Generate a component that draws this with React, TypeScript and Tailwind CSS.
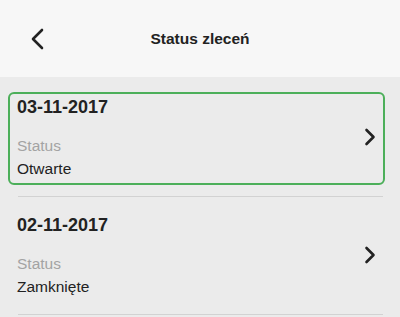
const orders = [
  { date: '03-11-2017', status: 'Otwarte', selected: true },
  { date: '02-11-2017', status: 'Zamknięte', selected: false },
]

function Chevron({ dir }: { dir: 'left' | 'right' }) {
  if (dir === 'left')
    return (
      <svg width="16" height="24" viewBox="0 0 16 24" fill="none" stroke="currentColor" strokeWidth="2.6" strokeLinecap="round" strokeLinejoin="round">
        <path d="M13 3 L4 12 L13 21" />
      </svg>
    )
  return (
    <svg width="14" height="20" viewBox="0 0 14 20" fill="none" stroke="currentColor" strokeWidth="2.6" strokeLinecap="round" strokeLinejoin="round">
      <path d="M3.5 3 L10.5 10 L3.5 17" />
    </svg>
  )
}

export default function App() {
  return (
    <div className="w-[400px] h-[317px] overflow-hidden bg-[#ebebeb] font-['Liberation_Sans',Arial,sans-serif] text-[#222]">
      {/* header */}
      <header className="h-[77px] bg-[#f7f7f7] flex items-center relative">
        <button className="ml-[29px] flex items-center text-[#222]">
          <Chevron dir="left" />
        </button>
        <h1 className="absolute left-0 right-0 text-center text-[15.5px] font-bold pointer-events-none">Status zleceń</h1>
      </header>

      {/* list */}
      <div className="pl-2 pr-[15px] pt-[15px]">
        {orders.map(o => (
          <div key={o.date}>
            <div
              className={`h-[93px] rounded-[6px] border-2 flex items-center pl-[7px] pr-[6px] ${
                o.selected ? 'border-[#4caf5a]' : 'border-transparent'
              }`}
            >
              <div className="flex-1 self-start pt-[2px]">
                <div className="text-[18px] leading-[22px] font-bold">{o.date}</div>
                <div className="mt-[16px] text-[15.5px] leading-[23px] text-[#a3a3a3]">Status</div>
                <div className="text-[15.5px] leading-[23px]">{o.status}</div>
              </div>
              <div className="mb-[4px] text-[#222]">
                <Chevron dir="right" />
              </div>
            </div>
            <div className="mt-[11px] mb-[13px] ml-[10px] mr-[2px] h-px bg-[#d2d2d2]" />
          </div>
        ))}
      </div>
    </div>
  )
}
